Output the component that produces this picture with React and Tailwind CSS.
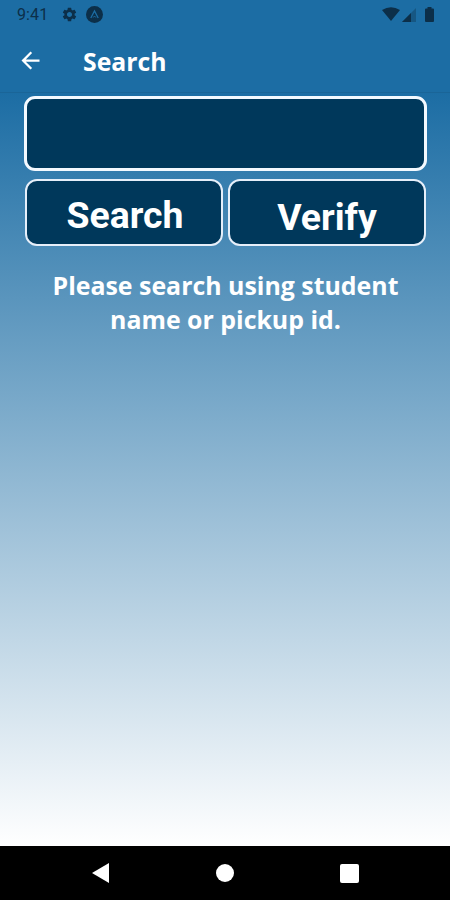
import React from "react";
import { MdSettings, MdArrowBack } from "react-icons/md";

function StatusBar() {
  return (
    <div className="flex h-[30px] items-center justify-between pl-[17px] pr-[16px] text-[#0c2f49]">
      <div className="flex items-center">
        <span className="w-[44px] font-['Roboto',sans-serif] text-[16px] leading-[30px] tracking-[0.1px]">
          9:41
        </span>
        <MdSettings className="size-[17px] -translate-y-px" />
        <svg className="ml-[8px] size-[17px] -translate-y-px" viewBox="0 0 17 17">
          <circle cx="8.5" cy="8.5" r="8.5" fill="currentColor" />
          <path
            d="M4.800 12 8.500 5l3.700 7"
            fill="none"
            stroke="#1c6da4"
            strokeWidth="1.300"
          />
          <path d="M7.200 11.500l1.300-1.500 1.300 1.500" fill="none" stroke="#1c6da4" />
        </svg>
      </div>
      <div className="flex items-center">
        <svg className="h-[14px] w-[18px] -translate-y-px" viewBox="0 0 18 14">
          <path d="M0 3Q9-2.400 18 3L9 14z" fill="currentColor" />
        </svg>
        <svg className="ml-[2px] h-[14px] w-[14px]" viewBox="0 0 14 14">
          <path d="M14 0v14H0z" fill="currentColor" opacity="0.35" />
          <path d="M9 5v9H0z" fill="currentColor" />
        </svg>
        <svg className="ml-[9px] h-[15px] w-[9px] -translate-y-px" viewBox="0 0 9 15">
          <path
            d="M2.500 0h4v1.500H8a1 1 0 0 1 1 1V14a1 1 0 0 1-1 1H1a1 1 0 0 1-1-1V2.500a1 1 0 0 1 1-1h1.500z"
            fill="currentColor"
          />
        </svg>
      </div>
    </div>
  );
}

function Header() {
  return (
    <header className="h-[93px] shrink-0 border-b border-[#1a6598] bg-[#1c6da4]">
      <StatusBar />
      <div className="flex h-[61px] items-center pl-[17px] text-white">
        <button type="button" aria-label="Back">
          <MdArrowBack className="size-[27px]" />
        </button>
        <h1 className="ml-[39px] font-['Open_Sans',sans-serif] text-[24.8px] font-bold leading-[34px]">
          Search
        </h1>
      </div>
    </header>
  );
}

function NavBar() {
  return (
    <nav className="flex h-[54px] shrink-0 items-center justify-between bg-black pl-[92px] pr-[91px]">
      <svg className="h-[20px] w-[17px]" viewBox="0 0 17 20">
        <path d="M17 0v20L0 10z" fill="#fff" />
      </svg>
      <div className="size-[18px] rounded-full bg-white" />
      <div className="size-[19px] rounded-[2px] bg-white" />
    </nav>
  );
}

export default function App() {
  return (
    <div className="flex h-[900px] w-[450px] flex-col overflow-hidden bg-black">
      <Header />
      <main className="flex-1 bg-linear-to-b/srgb from-[#1c6da4] to-white px-[24px] pt-[3px]">
        <input
          type="text"
          aria-label="Student name or pickup id"
          className="block h-[75px] w-[403px] rounded-[11px] border-3 border-[#f3f9ff] bg-[#00385b] px-4 text-white"
        />
        <div className="mt-[8px] flex gap-[5px] pl-[1px] font-['Roboto',sans-serif] text-[37.4px] font-bold leading-[44px] text-white">
          <button
            type="button"
            className="h-[67px] w-[198px] rounded-[12px] border-2 border-[#e6effa] bg-[#00385b] pt-[5px] pl-[2px]"
          >
            Search
          </button>
          <button
            type="button"
            className="h-[67px] w-[198px] rounded-[12px] border-2 border-[#e6effa] bg-[#00385b] pt-[9px]"
          >
            Verify
          </button>
        </div>
        <p className="mt-[22px] pl-[1px] text-center font-['Open_Sans',sans-serif] text-[24.9px] font-bold leading-[34px] text-white">
          Please search using student
          <br />
          name or pickup id.
        </p>
      </main>
      <NavBar />
    </div>
  );
}
